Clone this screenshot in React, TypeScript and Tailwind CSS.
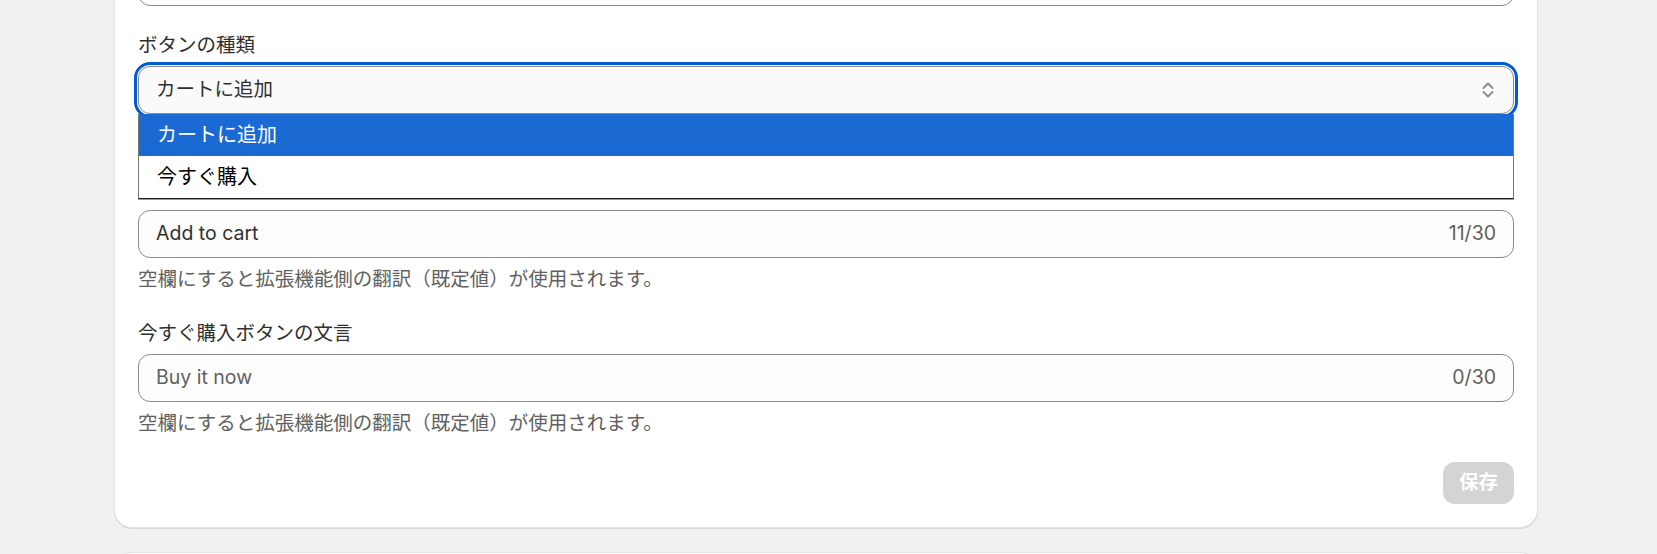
import { useState } from "react";

type Field = {
  label?: string;
  value: string;
  placeholder?: string;
  max?: number;
  help?: string;
};

const font = "font-['Inter','Noto_Sans_CJK_JP',sans-serif]";

function TextField({ label, value, placeholder, max, help }: Field) {
  return (
    <div className="flex flex-col gap-[6px]">
      {label && <div className="text-[19.5px] leading-[30px] text-[#303030]">{label}</div>}
      <div className="flex h-[48px] items-center rounded-[12px] border border-[#8a8a8a] bg-[#fdfdfd] pl-[17px] pr-[17px]">
        <input
          className="min-w-0 flex-1 bg-transparent text-[19.5px] text-[#303030] outline-none placeholder:text-[#616161]"
          value={value}
          placeholder={placeholder}
          readOnly
        />
        {max && (
          <span className="text-[19.5px] text-[#616161]">
            {value.length}/{max}
          </span>
        )}
      </div>
      {help && <div className="text-[19.5px] leading-[30px] text-[#616161]">{help}</div>}
    </div>
  );
}

function SelectIcon() {
  return (
    <svg width="12" height="18" viewBox="0 0 12 18" fill="none" stroke="#8a8a8a" strokeWidth="1.8" strokeLinecap="round" strokeLinejoin="round">
      <path d="M1.5 7 6 2.5 10.5 7" />
      <path d="M1.5 11 6 15.5 10.5 11" />
    </svg>
  );
}

export default function App() {
  const options = ["カートに追加", "今すぐ購入"];
  const [selected] = useState(0);
  const help = "空欄にすると拡張機能側の翻訳（既定値）が使用されます。";

  return (
    <div className={`min-h-[554px] overflow-hidden bg-[#f1f1f1] ${font}`}>
      <div className="-mt-[66px] ml-[114px] w-[1424px]">
        <div className="flex flex-col gap-[24px] rounded-[18px] border border-[#e3e3e3] bg-white p-[23px] shadow-[0_1px_0_0_rgba(0,0,0,0.1)]">
          <TextField value="" />

          <div className="flex flex-col gap-[6px]">
            <div className="text-[19.5px] leading-[30px] text-[#303030]">ボタンの種類</div>
            <div className="relative z-10">
              <div className="flex h-[48px] items-center justify-between rounded-[12px] border border-[#8a8a8a] bg-[#fafafa] pl-[17px] pr-[19px] outline-[3px] outline-offset-[1px] outline-[#005bd3] outline-solid">
                <span className="text-[19.5px] text-[#303030]">{options[selected]}</span>
                <SelectIcon />
              </div>
              <div className="absolute left-0 right-0 top-full border-x border-b-[1.5px] border-x-[#767676] border-b-[#1f1f1f] bg-white shadow-[0_1px_0_0_#9a9a9a]">
                {options.map((o, i) => (
                  <div
                    key={o}
                    className={
                      i === selected
                        ? "flex h-[42px] items-center bg-[#1b69d3] pl-[18px] text-[20px] text-white"
                        : "flex h-[42px] items-center pl-[18px] text-[20px] text-black"
                    }
                  >
                    {o}
                  </div>
                ))}
              </div>
            </div>
            <div className="invisible text-[19.5px] leading-[30px] text-[#616161]">{help}</div>
          </div>

          <div className="flex flex-col gap-[6px]">
            <div className="invisible text-[19.5px] leading-[30px] text-[#303030]">カートに追加ボタンの文言</div>
            <TextField value="Add to cart" max={30} help={help} />
          </div>

          <TextField label="今すぐ購入ボタンの文言" value="" placeholder="Buy it now" max={30} help={help} />

          <div className="flex justify-end">
            <button
              className="h-[42px] rounded-[12px] bg-[#d4d4d4] px-[16px] text-[19.5px] font-semibold text-white"
              disabled
            >
              保存
            </button>
          </div>
        </div>

        <div className="mt-[24px] h-[60px] rounded-[18px] border border-[#e3e3e3] bg-white" />
      </div>
    </div>
  );
}
